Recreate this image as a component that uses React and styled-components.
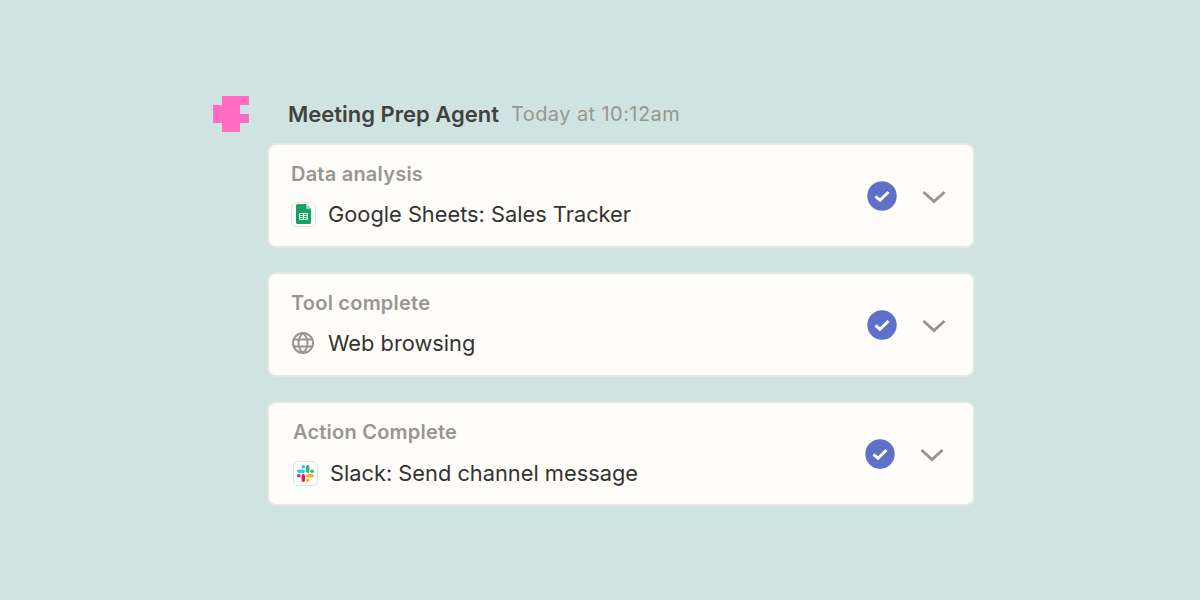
import React from "react";
import styled, { createGlobalStyle } from "styled-components";

const Global = createGlobalStyle`
  html, body { margin: 0; padding: 0; background: #cfe4e0; }
  body { font-family: Inter, "Liberation Sans", sans-serif; }
`;

const Page = styled.div`
  width: 1200px;
  height: 600px;
  box-sizing: border-box;
  padding: 96px 0 0 213px;
  background: #cfe4e0;
  overflow: hidden;
`;

const Header = styled.header`
  display: flex;
  align-items: flex-start;
  height: 47px;
`;

const Logo = styled.svg`
  width: 36px;
  height: 36px;
  flex: none;
  margin-right: 39px;
`;

const AgentName = styled.span`
  font-size: 22px;
  font-weight: 600;
  line-height: 37px;
  color: #42423f;
  margin-right: 12px;
`;

const Timestamp = styled.span`
  font-size: 20px;
  font-weight: 400;
  letter-spacing: 0.42px;
  line-height: 37px;
  color: #97968f;
`;

const CardList = styled.div`
  display: flex;
  flex-direction: column;
  gap: 24px;
  margin-left: 54px;
  width: 708px;
`;

const Card = styled.section`
  box-sizing: border-box;
  height: 105px;
  background: #fffdf9;
  border: 2px solid #e5e7e2;
  border-radius: 9px;
  padding: 16px ${(p) => (p.$shift ? 29 : 27)}px 0 ${(p) => (p.$shift ? 24 : 22)}px;
  display: flex;
  align-items: flex-start;
  justify-content: space-between;
`;

const CardBody = styled.div`
  display: flex;
  flex-direction: column;
`;

const CardTitle = styled.div`
  font-size: 20px;
  font-weight: 600;
  letter-spacing: 0.22px;
  line-height: 26px;
  color: #979691;
`;

const Detail = styled.div`
  display: flex;
  align-items: center;
  gap: 12px;
  margin-top: ${(p) => (p.$shift ? 15 : 14)}px;
  height: 26px;
`;

const DetailText = styled.span`
  font-size: 21.8px;
  font-weight: 400;
  line-height: 26px;
  color: #333331;
`;

const IconFrame = styled.span`
  box-sizing: border-box;
  width: 25px;
  height: 25px;
  flex: none;
  border: ${(p) => (p.$bare ? "none" : "1.5px solid #e4e4df")};
  border-radius: 5px;
  background: #fffefb;
  display: flex;
  align-items: center;
  justify-content: ${(p) => (p.$bare ? "flex-start" : "center")};
`;

const Actions = styled.div`
  display: flex;
  align-items: center;
  gap: 25px;
  margin-top: 20px;
`;

const Glyph = styled.svg`
  display: block;
  flex: none;
`;

const ChevronGlyph = styled(Glyph)`
  margin-top: 2px;
`;

const LogoMark = () => (
  <Logo viewBox="0 0 36 36">
    <path fill="#ff6cc1" d="M9 0H36V9H27V18H36V27H27V36H9V27H0V9H9Z" />
  </Logo>
);

const SheetsIcon = () => (
  <Glyph width="15" height="20" viewBox="0 0 15 20">
    <path fill="#16a263" d="M1.5 0H10L15 5V18.5A1.5 1.5 0 0 1 13.500 20H1.500A1.500 1.500 0 0 1 0 18.500V1.500A1.500 1.500 0 0 1 1.500 0Z" />
    <path fill="#8fd2b1" d="M10 0L15 5H11.200A1.200 1.200 0 0 1 10 3.800Z" />
    <path fill="none" stroke="#e8f5ee" strokeWidth="1" d="M3.500 9.500H11.500V15.500H3.500ZM3.500 11.500H11.500M3.500 13.500H11.500M7.500 9.500V15.500" />
  </Glyph>
);

const GlobeIcon = () => (
  <Glyph width="24" height="24" viewBox="0 0 24 24" fill="none" stroke="#96958f" strokeWidth="2">
    <circle cx="12" cy="12" r="10" />
    <path d="M2.500 8.500H21.500M2.500 15.500H21.500" />
    <path d="M12 2C8.500 5 7.500 8.500 7.500 12S8.500 19 12 22C15.500 19 16.500 15.500 16.500 12S15.500 5 12 2Z" />
  </Glyph>
);

const SlackIcon = () => (
  <Glyph width="17" height="17" viewBox="0 0 17 17">
    <g fill="none" strokeWidth="3.400" strokeLinecap="round">
      <path stroke="#36c5f0" d="M1.800 6.300H6.200" />
      <path stroke="#36c5f0" d="M6.300 1.800V1.900" />
      <path stroke="#2eb67d" d="M10.700 1.800V6.200" />
      <path stroke="#2eb67d" d="M15.200 6.300H15.100" />
      <path stroke="#ecb22e" d="M15.200 10.700H10.800" />
      <path stroke="#ecb22e" d="M10.700 15.200V15.100" />
      <path stroke="#e01e5a" d="M6.300 15.200V10.800" />
      <path stroke="#e01e5a" d="M1.800 10.700H1.900" />
    </g>
  </Glyph>
);

const CheckBadge = () => (
  <Glyph width="30" height="30" viewBox="0 0 30 30">
    <circle cx="15" cy="15" r="14.700" fill="#5f70c9" />
    <path d="M8.500 15.300L13 19.300L21.500 11" fill="none" stroke="#fff" strokeWidth="3" />
  </Glyph>
);

const Chevron = () => (
  <ChevronGlyph width="24" height="14" viewBox="0 0 24 14">
    <path d="M1.500 2L12 11.500L22.500 2" fill="none" stroke="#96958f" strokeWidth="3" />
  </ChevronGlyph>
);

const rows = [
  { title: "Data analysis", text: "Google Sheets: Sales Tracker", icon: <IconFrame><SheetsIcon /></IconFrame> },
  { title: "Tool complete", text: "Web browsing", icon: <IconFrame $bare><GlobeIcon /></IconFrame> },
  { title: "Action Complete", text: "Slack: Send channel message", shift: true, icon: <IconFrame><SlackIcon /></IconFrame> },
];

export default function App() {
  return (
    <Page>
      <Global />
      <Header>
        <LogoMark />
        <AgentName>Meeting Prep Agent</AgentName>
        <Timestamp>Today at 10:12am</Timestamp>
      </Header>
      <CardList>
        {rows.map((r) => (
          <Card key={r.title} $shift={r.shift}>
            <CardBody>
              <CardTitle>{r.title}</CardTitle>
              <Detail $shift={r.shift}>
                {r.icon}
                <DetailText>{r.text}</DetailText>
              </Detail>
            </CardBody>
            <Actions>
              <CheckBadge />
              <Chevron />
            </Actions>
          </Card>
        ))}
      </CardList>
    </Page>
  );
}
